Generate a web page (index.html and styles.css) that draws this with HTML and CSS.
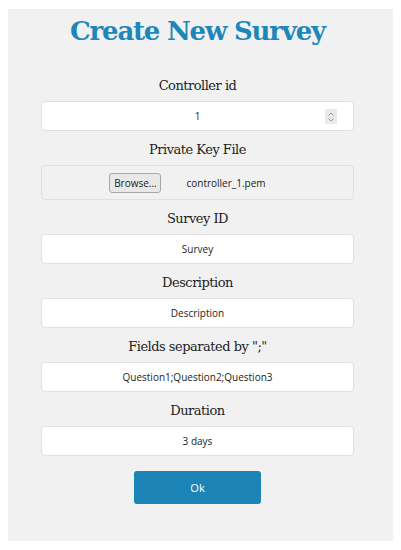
FILE: index.html
```html
<!DOCTYPE html>
<html>
<head>
<meta charset="utf-8">
<link rel="stylesheet" href="styles.css">
</head>
<body>
<div class="panel">
  <h1 class="title">Create New Survey</h1>
  <form class="form">
    <label class="label">Controller id</label>
    <div class="field number">
      <span class="value">1</span>
      <span class="spin">
        <svg width="10" height="14" viewBox="0 0 10 14"><path d="M2.5 5.5 L5 3 L7.5 5.5" fill="none" stroke="#9a9a9a" stroke-width="1"/><path d="M2.5 8.5 L5 11 L7.5 8.5" fill="none" stroke="#9a9a9a" stroke-width="1"/></svg>
      </span>
    </div>
    <label class="label">Private Key File</label>
    <div class="field file">
      <span class="browse">Browse...</span>
      <span class="filename">controller_1.pem</span>
    </div>
    <label class="label">Survey ID</label>
    <div class="field"><span class="value">Survey</span></div>
    <label class="label">Description</label>
    <div class="field"><span class="value">Description</span></div>
    <label class="label">Fields separated by ";"</label>
    <div class="field"><span class="value">Question1;Question2;Question3</span></div>
    <label class="label">Duration</label>
    <div class="field"><span class="value">3 days</span></div>
    <div class="actions"><button type="button" class="ok">Ok</button></div>
  </form>
</div>
</body>
</html>
```
FILE: styles.css
```css
html, body {
  margin: 0;
  padding: 0;
  background: #ffffff;
}
body {
  padding: 9px 8px 9px 8px;
}
.panel {
  width: 385px;
  height: 532px;
  background: #f1f1f1;
  box-sizing: border-box;
  padding-top: 4px;
  padding-right: 6px;
}
.title {
  margin: 0;
  font-family: "DejaVu Serif", serif;
  font-weight: bold;
  font-size: 26px;
  letter-spacing: -1.2px;
  line-height: 36px;
  color: #1e87b9;
  text-align: center;
}
.form {
  display: flex;
  flex-direction: column;
  align-items: center;
  padding-top: 27px;
}
.label {
  display: block;
  font-family: "DejaVu Serif", serif;
  font-size: 13px;
  letter-spacing: -0.5px;
  line-height: 20px;
  color: #222;
  text-align: center;
  margin-bottom: 5px;
}
.field {
  width: 313px;
  height: 30px;
  box-sizing: border-box;
  background: #ffffff;
  border: 1px solid #e0e0e0;
  border-radius: 4px;
  display: flex;
  align-items: center;
  justify-content: center;
  position: relative;
  margin-bottom: 9px;
  font-family: "Open Sans", "DejaVu Sans", sans-serif;
  font-size: 10px;
  color: #222;
}
.spin {
  position: absolute;
  right: 16px;
  top: 7px;
  width: 12px;
  height: 15px;
  background: #e9e9ec;
  display: flex;
  align-items: center;
  justify-content: center;
}
.file {
  height: 35px;
  background: #f1f1f1;
  gap: 25px;
  padding-right: 20px;
}
.browse {
  box-sizing: border-box;
  height: 20px;
  width: 52px;
  display: flex;
  align-items: center;
  justify-content: center;
  border: 1px solid #a8a8a8;
  border-radius: 3px;
  background: #e8e8e8;
  font-size: 10px;
  color: #222;
}
.actions {
  padding-top: 6px;
}
.ok {
  width: 127px;
  height: 33px;
  background: #1d84b7;
  border: none;
  border-radius: 3px;
  color: #ffffff;
  font-family: "Open Sans", "DejaVu Sans", sans-serif;
  font-size: 11px;
}
```
